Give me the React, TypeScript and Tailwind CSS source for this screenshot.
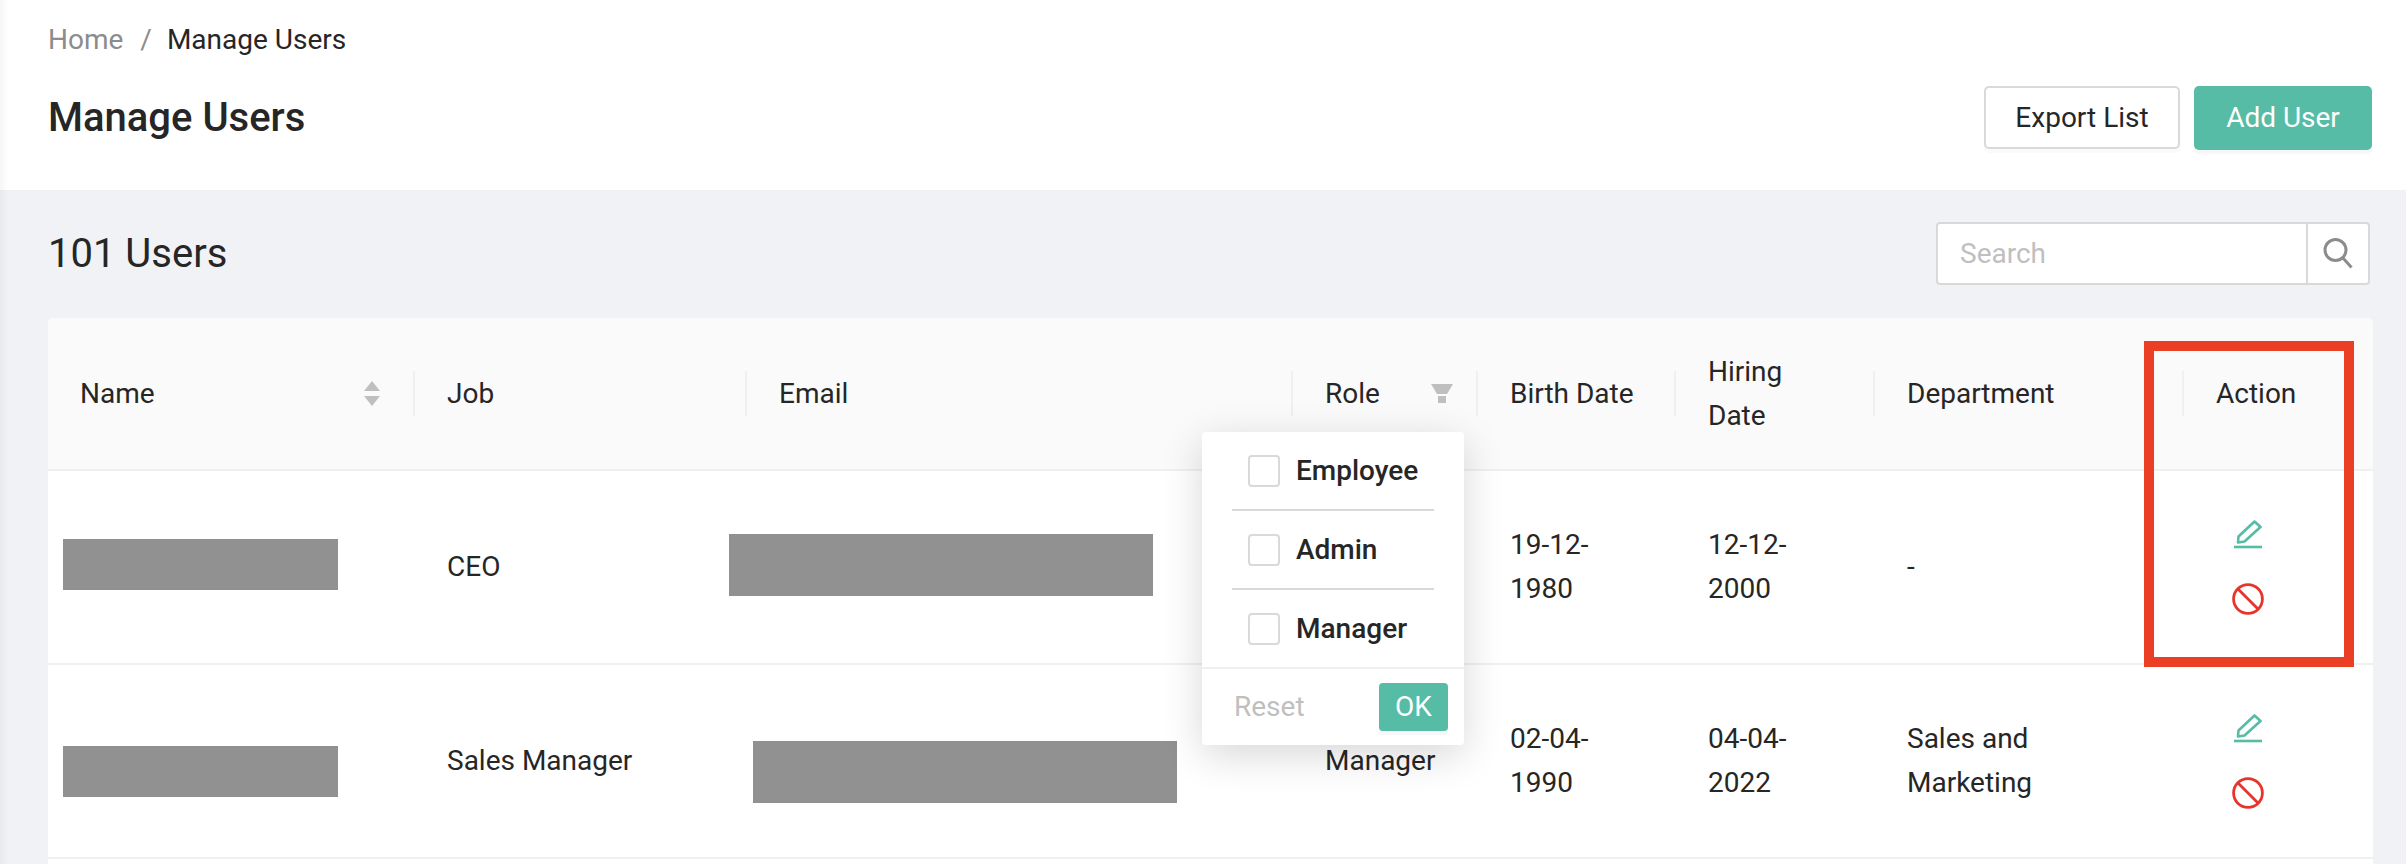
const headers = ["Job", "Email"];

const EditIcon = () => (
  <svg width="28" height="29" viewBox="0 0 28 29" fill="none" stroke="#56bca5">
    <path d="M4.5 16.5 20.5 1.5 26.5 7 10.5 21.5 4 22.5Z" strokeWidth="2.6" strokeLinejoin="round" />
    <path d="M0 27h28" strokeWidth="2.6" />
  </svg>
);

const BanIcon = () => (
  <svg width="32" height="32" viewBox="0 0 32 32" fill="none" stroke="#e8352b" strokeWidth="2.8">
    <circle cx="16" cy="16" r="14.4" />
    <path d="M6 6l20 20" />
  </svg>
);

const Redacted = ({ className }: { className: string }) => (
  <div className={`bg-[#919191] ${className}`} />
);

const HeadDivider = () => <span className="h-[45px] w-[2px] shrink-0 bg-[#f0f0f0]" />;

const HeadCell = ({ children }: { children: React.ReactNode }) => (
  <div className="flex items-center">
    <HeadDivider />
    <div className="flex-1 pl-[32px] pr-8">{children}</div>
  </div>
);

type RowProps = {
  job: string;
  role?: string;
  birth: string;
  hiring: string;
  department: React.ReactNode;
  emailBox: string;
  nameBox: string;
};

const UserRow = (props: RowProps) => (
  <div className="grid h-[194px] grid-cols-[366px_332px_546px_185px_198px_199px_309px_190px] items-center border-b-2 border-[#f0f0f0] bg-white">
    <div className="pl-8">
      <Redacted className={props.nameBox} />
    </div>
    <div className="pl-[33px]">{props.job}</div>
    <div className="pl-[32px]">
      <Redacted className={props.emailBox} />
    </div>
    <div className="pl-[33px]">{props.role}</div>
    <div className="pl-[33px] pr-8">{props.birth}</div>
    <div className="pl-[33px] pr-8">{props.hiring}</div>
    <div className="pl-[33px]">{props.department}</div>
    <div className="flex flex-col gap-[34px] pl-[49px]">
      <div className="pl-[2px]">
        <EditIcon />
      </div>
      <BanIcon />
    </div>
  </div>
);

const RoleOption = ({ label, last }: { label: string; last?: boolean }) => (
  <div className={`mx-[30px] flex items-center gap-4 pl-4 ${last ? "h-[77px]" : "h-[79px] border-b-2 border-[#d9d9d9]"}`}>
    <span className="size-8 rounded-[4px] border-2 border-[#d9d9d9] bg-white" />
    <span className="font-medium">{label}</span>
  </div>
);

const App = () => {
  return (
    <div className="h-[864px] w-full overflow-hidden bg-[#f0f2f5] font-[Roboto,sans-serif] text-[28px] leading-[44px] text-[#262626]">
      <header className="h-[190px] bg-white pl-12 pr-[34px] pt-[18px] shadow-[inset_12px_0_10px_-10px_rgba(0,0,0,0.06)]">
        <div className="flex h-[44px] items-center">
          <span className="text-[#8c8c8c]">Home</span>
          <span className="ml-[17px] text-[#8c8c8c]">/</span>
          <span className="ml-[15px]">Manage Users</span>
        </div>
        <div className="mt-[24px] flex items-center justify-between">
          <h1 className="text-[40px] font-medium">Manage Users</h1>
          <div className="flex gap-[14px]">
            <button className="h-[63px] w-[196px] rounded-[5px] border-2 border-[#d9d9d9] bg-white shadow-[0_4px_0_rgba(0,0,0,0.02)]">
              Export List
            </button>
            <button className="h-[64px] w-[178px] rounded-[5px] bg-[#56bca5] text-white shadow-[0_4px_0_rgba(0,0,0,0.03)]">
              Add User
            </button>
          </div>
        </div>
      </header>

      <main className="pl-12 pr-[33px] pt-8 shadow-[inset_12px_0_10px_-10px_rgba(0,0,0,0.06)]">
        <div className="flex h-[63px] items-center justify-between">
          <h2 className="text-[40px] font-normal">101 Users</h2>
          <div className="mr-[3px] flex h-[63px] w-[434px] rounded-[4px] border-2 border-[#d9d9d9] bg-white">
            <div className="flex flex-1 items-center pl-[22px] pt-[1px] text-[#bfbfbf]">Search</div>
            <div className="flex w-[62px] items-center justify-center border-l-2 border-[#d9d9d9]">
              <svg width="30" height="33" viewBox="0 0 30 33" fill="none" stroke="#8c8c8c" strokeWidth="3">
                <circle cx="12.5" cy="13" r="10.5" />
                <path d="M20 21l8.5 9.5" />
              </svg>
            </div>
          </div>
        </div>

        <div className="relative mt-[33px] rounded-t-[5px]">
          <div className="grid h-[153px] grid-cols-[365px_332px_546px_185px_198px_199px_309px_191px] items-center rounded-t-[5px] border-b-2 border-[#f0f0f0] bg-[#fafafa]">
            <div className="flex items-center justify-between pl-8 pr-[33px]">
              <span>Name</span>
              <svg width="16" height="25" viewBox="0 0 16 25" fill="#bfbfbf">
                <path d="M8 0l8 10H0z" />
                <path d="M0 15h16L8 25z" />
              </svg>
            </div>
            {headers.map((h) => (
              <HeadCell key={h}>{h}</HeadCell>
            ))}
            <HeadCell>
              <div className="flex items-center justify-between">
                <span>Role</span>
                <svg className="-mr-[9px]" width="22" height="19" viewBox="0 0 22 19" fill="#bfbfbf">
                  <path d="M0 0h22l-6 10H6z" />
                  <path d="M7 12h8v7H7z" />
                </svg>
              </div>
            </HeadCell>
            <HeadCell>Birth Date</HeadCell>
            <HeadCell>Hiring Date</HeadCell>
            <HeadCell>Department</HeadCell>
            <HeadCell>Action</HeadCell>
          </div>

          <UserRow
            job="CEO"
            birth="19-12-1980"
            hiring="12-12-2000"
            department="-"
            nameBox="-ml-[17px] -mt-[6px] h-[51px] w-[275px]"
            emailBox="-ml-[49px] -mt-[4px] h-[62px] w-[424px]"
          />
          <UserRow
            job="Sales Manager"
            role="Manager"
            birth="02-04-1990"
            hiring="04-04-2022"
            department={
              <>
                Sales and
                <br />
                Marketing
              </>
            }
            nameBox="-ml-[17px] mt-[20px] h-[51px] w-[275px]"
            emailBox="-ml-[25px] mt-[22px] h-[62px] w-[424px]"
          />
          <div className="h-[20px] bg-white" />

          {/* role filter dropdown */}
          <div className="absolute left-[1154px] top-[114px] w-[262px] rounded-[4px] bg-white shadow-[0_10px_40px_rgba(0,0,0,0.16)]">
            <RoleOption label="Employee" />
            <RoleOption label="Admin" />
            <RoleOption label="Manager" last />
            <div className="flex h-[78px] items-center justify-between border-t-2 border-[#f0f0f0] pl-[32px] pr-4">
              <span className="text-[#bfbfbf]">Reset</span>
              <button className="h-[48px] w-[69px] rounded-[4px] bg-[#56bca5] text-white shadow-[0_4px_0_rgba(0,0,0,0.03)]">
                OK
              </button>
            </div>
          </div>

          {/* annotation box around the action column */}
          <div className="absolute left-[2096px] top-[23px] h-[326px] w-[210px] border-[10px] border-[#ea3f25]" />
        </div>
      </main>
    </div>
  );
};

export default App;
